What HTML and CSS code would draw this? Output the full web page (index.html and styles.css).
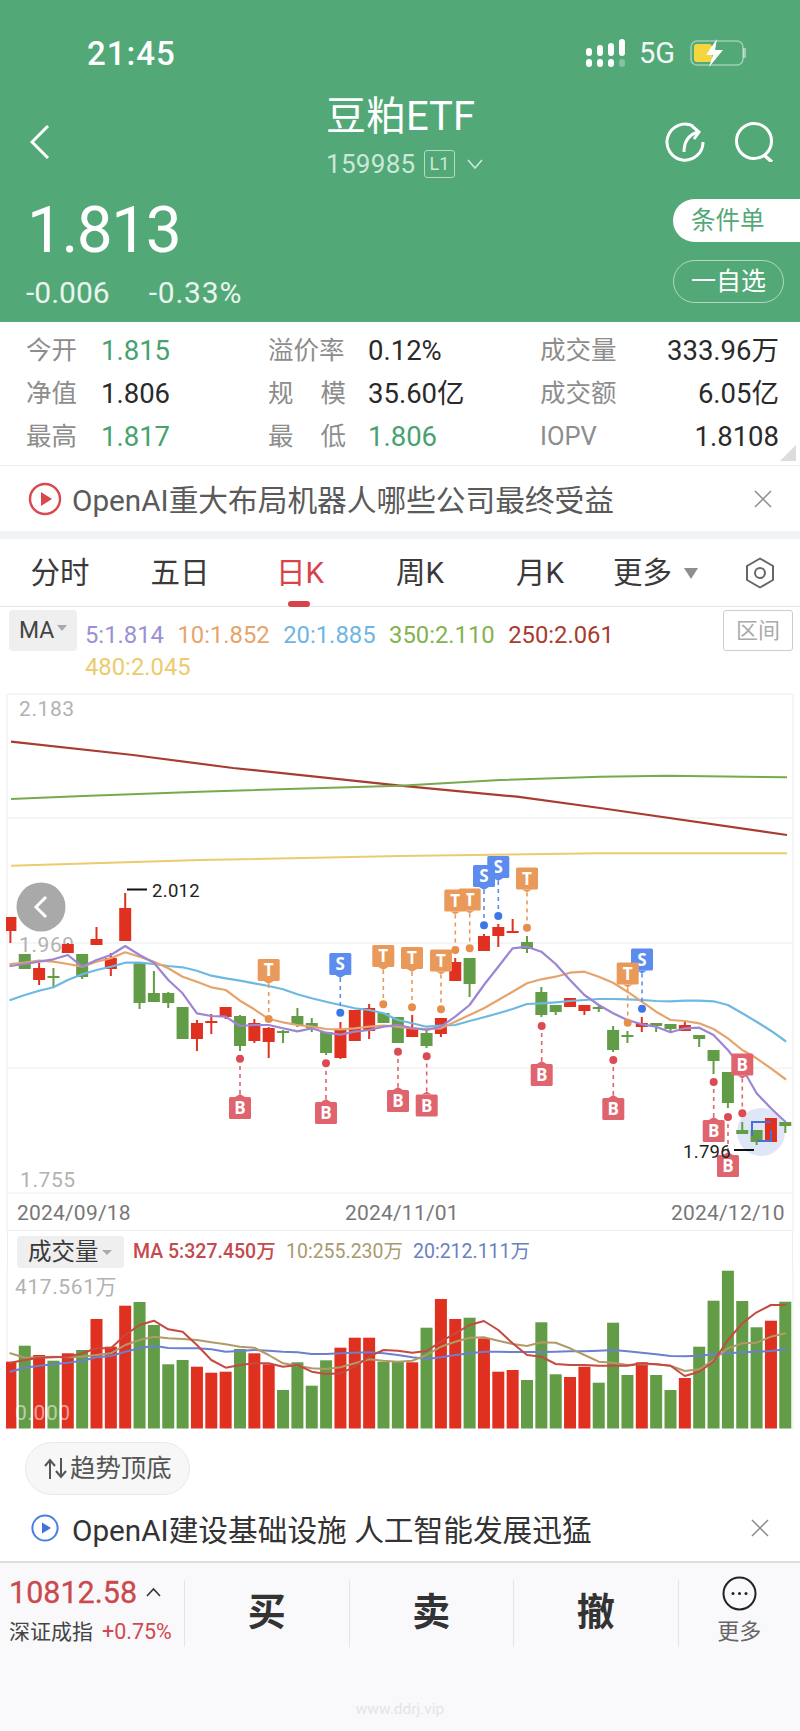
FILE: index.html
```html
<!DOCTYPE html>
<html lang="zh">
<head>
<meta charset="utf-8">
<title>豆粕ETF</title>
<link rel="stylesheet" href="styles.css">
</head>
<body>
<div class="page">
  <header class="head">
    <div class="status">
      <span class="time">21:45</span>
      <div class="status-right">
        <svg class="signal" width="40" height="28" viewBox="0 0 40 28">
          <g fill="#fff">
            <rect x="0" y="9" width="6" height="8" rx="3"/><rect x="0" y="20" width="6" height="8" rx="3"/>
            <rect x="11" y="6" width="6" height="11" rx="3"/><rect x="11" y="20" width="6" height="8" rx="3"/>
            <rect x="22" y="4" width="6" height="13" rx="3"/><rect x="22" y="20" width="6" height="8" rx="3"/>
            <rect x="33" y="0" width="6" height="17" rx="3"/><rect x="33" y="20" width="6" height="8" rx="3" opacity=".3"/>
          </g>
        </svg>
        <span class="net">5G</span>
        <svg class="battery" width="57" height="28" viewBox="0 0 57 28">
          <rect x="1" y="2" width="52" height="24" rx="6" fill="none" stroke="#fff" stroke-opacity=".45" stroke-width="1.5"/>
          <path d="M53 9 h2 a1 1 0 0 1 1 1 v8 a1 1 0 0 1 -1 1 h-2z" fill="#fff" fill-opacity=".45"/>
          <rect x="4" y="5" width="18" height="18" rx="3" fill="#f6d63f"/>
          <path d="M27 0 L16 16 H23 L19 28 L33 11 H25 Z" fill="#fff"/>
        </svg>
      </div>
    </div>
    <div class="nav">
      <svg class="back" width="20" height="34" viewBox="0 0 20 34"><path d="M18 1 L2 17 L18 33" fill="none" stroke="#fff" stroke-width="3"/></svg>
      <div class="title-block">
        <div class="title">豆粕ETF</div>
        <div class="code-row">
          <span class="code">159985</span><span class="level">L1</span>
          <svg width="16" height="11" viewBox="0 0 16 11"><path d="M1 1 L8 9 L15 1" fill="none" stroke="#cfe8da" stroke-width="1.6"/></svg>
        </div>
      </div>
      <div class="nav-icons">
        <svg width="40" height="40" viewBox="0 0 40 40"><path d="M28 4 A18 18 0 1 0 38 20" fill="none" stroke="#fff" stroke-width="3"/><path d="M19 30 C19 20 23 13 33 10" fill="none" stroke="#fff" stroke-width="3"/><path d="M27 4 L34 10 L29 17" fill="none" stroke="#fff" stroke-width="3"/></svg>
        <svg width="40" height="40" viewBox="0 0 40 40"><circle cx="19" cy="19" r="17.5" fill="none" stroke="#fff" stroke-width="3"/><path d="M29 33 L37 40" stroke="#fff" stroke-width="3.5"/></svg>
      </div>
    </div>
    <div class="quote">
      <div class="quote-left">
        <div class="price">1.813</div>
        <div class="changes"><span>-0.006</span><span class="pct">-0.33%</span></div>
      </div>
      <div class="quote-right">
        <div class="pill-solid">条件单</div>
        <div class="pill-line">一自选</div>
      </div>
    </div>
  </header>

  <section class="stats">
    <span class="lb">今开</span><span class="val up">1.815</span>
    <span class="lb">溢价率</span><span class="val">0.12%</span>
    <span class="lb">成交量</span><span class="val right">333.96万</span>
    <span class="lb">净值</span><span class="val">1.806</span>
    <span class="lb spread"><i>规</i><i>模</i></span><span class="val">35.60亿</span>
    <span class="lb">成交额</span><span class="val right">6.05亿</span>
    <span class="lb">最高</span><span class="val up">1.817</span>
    <span class="lb spread"><i>最</i><i>低</i></span><span class="val up">1.806</span>
    <span class="lb">IOPV</span><span class="val right">1.8108</span>
    <span class="corner"></span>
  </section>

  <section class="news news-top">
    <svg width="34" height="34" viewBox="0 0 34 34"><circle cx="17" cy="17" r="15" fill="none" stroke="#d9484e" stroke-width="2.4"/><path d="M13 10 L24 17 L13 24Z" fill="#d9484e"/></svg>
    <p class="news-text">OpenAI重大布局机器人哪些公司最终受益</p>
    <svg class="close" width="18" height="18" viewBox="0 0 18 18"><path d="M1 1 L17 17 M17 1 L1 17" stroke="#8c8c8c" stroke-width="1.5"/></svg>
  </section>
  <div class="band"></div>

  <nav class="tabs">
    <span class="tab">分时</span>
    <span class="tab">五日</span>
    <span class="tab active">日K</span>
    <span class="tab">周K</span>
    <span class="tab">月K</span>
    <span class="tab more">更多<em></em></span>
    <svg class="gear" width="30" height="32" viewBox="0 0 30 32"><path d="M15 1.5 L28 9 V23 L15 30.5 L2 23 V9 Z" fill="none" stroke="#666" stroke-width="2" stroke-linejoin="round"/><circle cx="15" cy="16" r="5" fill="none" stroke="#666" stroke-width="2"/></svg>
  </nav>

  <section class="legend">
    <div class="ma-btn">MA<em></em></div>
    <div class="ma-vals">
      <span class="c5">5:1.814</span><span class="c10">10:1.852</span><span class="c20">20:1.885</span><span class="c350">350:2.110</span><span class="c250">250:2.061</span><span class="c480">480:2.045</span>
    </div>
    <div class="range">区间</div>
  </section>

  <svg id="price" class="chart" width="800" height="540" viewBox="0 690 800 540">
    <g class="frame">
      <path d="M7 694 H793 M7 818 H793 M7 943 H793 M7 1068 H793 M7 1193 H793 M7 694 V1230 M793 694 V1230"/>
    </g>
    <text class="axis" x="19" y="716">2.183</text>
    <text class="axis" x="19" y="952">1.969</text>
    <text class="axis" x="20" y="1187">1.755</text>
    <text class="date" x="17" y="1220">2024/09/18</text>
    <text class="date" x="345" y="1220">2024/11/01</text>
    <text class="date" x="671" y="1220">2024/12/10</text>
    <circle cx="761" cy="1132" r="24" fill="#dfe7f7"/>
    <g id="plot"></g>
    <path d="M752 1136 V1122 H771 M757 1141 H771 V1130" fill="none" stroke="#4a6fd8" stroke-width="2"/>
    <path d="M127 889.5 H147 M734 1150 H754" stroke="#111" stroke-width="1.8"/>
    <text class="mark" x="152" y="897">2.012</text>
    <text class="mark" x="683" y="1158">1.796</text>
    <circle cx="41" cy="907" r="24.5" fill="#a9a9a9"/>
    <path d="M46 897 L36 907 L46 917" fill="none" stroke="#fff" stroke-width="3"/>
  </svg>

  <section class="vol-head">
    <div class="vol-btn">成交量<em></em></div>
    <span class="v5">MA 5:327.450万</span>
    <span class="v10">10:255.230万</span>
    <span class="v20">20:212.111万</span>
  </section>
  <svg id="volume" class="chart" width="800" height="172" viewBox="0 1270 800 172">
    <path class="frameline" d="M7 1270 V1430 M793 1270 V1430"/>
    <text class="axis vol" x="15" y="1294">417.561万</text>
    <g id="vplot"></g>
    <text class="axis vol zero" x="15" y="1420">0.000</text>
  </svg>

  <div class="trend">
    <svg class="arrows" width="26" height="22" viewBox="0 0 26 22"><path d="M7 21 V2 M2 8 L7 2 L12 8 M18 0 V19 M13 13 L18 19 L23 13" fill="none" stroke="#555" stroke-width="2"/></svg>
    <span>趋势顶底</span>
  </div>

  <section class="news news-bot">
    <svg width="28" height="28" viewBox="0 0 28 28"><circle cx="14" cy="14" r="12.6" fill="none" stroke="#4a7fe0" stroke-width="2"/><path d="M11 8.5 L20 14 L11 19.5Z" fill="#3f74dc"/></svg>
    <p class="news-text dark">OpenAI建设基础设施 人工智能发展迅猛</p>
    <svg class="close" width="18" height="18" viewBox="0 0 18 18"><path d="M1 1 L17 17 M17 1 L1 17" stroke="#8c8c8c" stroke-width="1.5"/></svg>
  </section>

  <footer class="bar">
    <div class="bar-row">
      <div class="index">
        <div class="idx-top"><span class="idx-num">10812.58</span><svg width="15" height="10" viewBox="0 0 15 10"><path d="M1 9 L7.5 2 L14 9" fill="none" stroke="#333" stroke-width="1.6"/></svg></div>
        <div class="idx-bot"><span>深证成指</span><span class="idx-pct">+0.75%</span></div>
      </div>
      <div class="act">买</div>
      <div class="act">卖</div>
      <div class="act">撤</div>
      <div class="act-more">
        <svg width="35" height="35" viewBox="0 0 35 35"><circle cx="17.5" cy="17.5" r="16" fill="none" stroke="#222" stroke-width="2"/><circle cx="11" cy="17.5" r="1.5" fill="#222"/><circle cx="17.5" cy="17.5" r="1.5" fill="#222"/><circle cx="24" cy="17.5" r="1.5" fill="#222"/></svg>
        <span>更多</span>
      </div>
    </div>
    <div class="mark-site">www.ddrj.vip</div>
  </footer>
</div>
<script src="chart.js"></script>
</body>
</html>
```

FILE: styles.css
```css
* { box-sizing: border-box; }
html, body { margin: 0; padding: 0; background: #fff; }
body { font-family: Roboto, "Noto Sans CJK SC", sans-serif; }
.page { width: 800px; height: 1731px; overflow: hidden; display: flex; flex-direction: column; }
p { margin: 0; }
em { font-style: normal; }
i { font-style: normal; }

.head { height: 322px; background: #52a877; color: #fff; flex: none; }
.status { margin-top: 14px; height: 78px; padding: 0 53px 0 87px; display: flex; justify-content: space-between; align-items: center; }
.time { font-size: 33px; font-weight: 500; letter-spacing: 1px; }
.status-right { display: flex; align-items: center; }
.net { font-size: 29px; margin: 0 15px 0 13px; color: #f2f9f5; }
.nav { height: 86px; padding: 7px 25px 0 30px; display: flex; justify-content: space-between; position: relative; }
.back { margin-top: 26px; }
.title-block { position: absolute; left: 326px; top: 7px; }
.title { font-size: 40px; line-height: 36px; height: 36px; white-space: nowrap; }
.code-row { margin-top: 15px; height: 28px; display: flex; align-items: center; color: #cde7d9; }
.code { font-size: 26px; width: 98px; letter-spacing: .3px; }
.level { width: 31px; height: 28px; border: 1px solid #b6dcc8; border-radius: 3px; font-size: 18px; text-align: center; line-height: 26px; margin-right: 12px; }
.nav-icons { display: flex; gap: 30px; margin-top: 23px; height: 40px; }
.quote { height: 144px; display: flex; justify-content: space-between; }
.quote-left { padding: 22px 0 0 27px; }
.price { font-size: 64px; line-height: 62px; letter-spacing: -1.5px; }
.changes { margin-top: 16px; display: flex; gap: 39px; font-size: 30px; line-height: 30px; margin-left: -1px; color: #e9f5ee; }
.pct { letter-spacing: .8px; }
.quote-right { width: 127px; padding-top: 21px; display: flex; flex-direction: column; gap: 18px; }
.pill-solid { height: 43px; background: #fff; border-radius: 22px 0 0 22px; color: #52a877; font-size: 24.5px; line-height: 43px; padding-left: 18px; }
.pill-line { width: 111px; height: 43px; border: 1px solid rgba(255,255,255,.55); border-radius: 22px; font-size: 25px; line-height: 41px; padding-left: 17px; white-space: nowrap; }

.stats { height: 144px; flex: none; padding: 7px 21px 0 26px; display: grid; grid-template-columns: 75px 167px 100px 172px 100px 1fr; grid-auto-rows: 43px; align-items: center; border-bottom: 1px solid #ececec; position: relative; }
.lb { color: #8d8d8d; font-size: 25.5px; line-height: 43px; white-space: nowrap; }
.spread { display: flex; justify-content: space-between; width: 78px; }
.val { color: #2a2a2a; font-size: 27.5px; line-height: 43px; white-space: nowrap; }
.val.up { color: #47a26f; }
.val.right { text-align: right; }
.corner { position: absolute; right: 4px; bottom: 4px; width: 0; height: 0; border-left: 16px solid transparent; border-bottom: 16px solid #dcdcdc; }

.news { display: flex; align-items: center; flex: none; }
.news-top { height: 65px; padding: 0 28px 0 28px; }
.news-bot { height: 66px; padding: 0 31px 0 31px; }
.news-text { font-size: 29.7px; color: #5a5a5a; white-space: nowrap; margin-left: 10px; flex: 1; }
.news-bot .news-text { margin-left: 13px; }
.news-text.dark { color: #333; }
.band { height: 8px; background: #f0f3f6; flex: none; }

.tabs { height: 68px; flex: none; display: grid; grid-template-columns: repeat(5, 120px) 98px 1fr; align-items: center; border-bottom: 1px solid #e6e6e6; }
.tab { font-size: 29.5px; color: #3a3a3a; text-align: center; position: relative; line-height: 68px; height: 68px; }
.tab.active { color: #d8434a; }
.tab.active::after { content: ""; position: absolute; left: 48px; bottom: 0; width: 22px; height: 6px; border-radius: 3px; background: #d8434a; }
.more { display: flex; align-items: center; justify-content: flex-end; white-space: nowrap; }
.more em { width: 0; height: 0; margin-left: 12px; border-left: 7px solid transparent; border-right: 7px solid transparent; border-top: 11px solid #8e8e8e; }
.gear { justify-self: end; margin-right: 25px; }

.legend { height: 83px; flex: none; position: relative; padding: 3px 0 0 9px; display: flex; align-items: flex-start; gap: 8px; }
.ma-btn { width: 68px; height: 41px; background: #efefef; border-radius: 4px; color: #444; font-size: 23px; line-height: 41px; padding-left: 10px; display: flex; align-items: center; }
.ma-btn em { margin-left: 3px; border-left: 5px solid transparent; border-right: 5px solid transparent; border-top: 6px solid #aaa; margin-top: -5px; }
.ma-vals { width: 560px; padding-top: 9px; display: flex; flex-wrap: wrap; column-gap: 13.5px; font-size: 23.8px; line-height: 32px; }
.c5 { color: #9c8fd6; } .c10 { color: #e5a56c; } .c20 { color: #6db6e4; } .c350 { color: #84b24f; } .c250 { color: #a83c30; } .c480 { color: #eccb6e; }
.range { position: absolute; right: 7px; top: 3px; width: 70px; height: 41px; border: 1px solid #ccc; border-radius: 3px; color: #aaa; font-size: 22px; line-height: 39px; text-align: center; }

.chart { display: block; flex: none; }
.frame path, .frameline { fill: none; stroke: #ececec; stroke-width: 1; }
.axis { font-size: 21px; fill: #b2b2b2; letter-spacing: .6px; }
.axis.vol { font-size: 21px; }
.axis.zero { fill: #fff; fill-opacity: .55; }
.date { font-size: 21px; fill: #777; letter-spacing: .2px; }
.mark { font-size: 18.5px; fill: #222; letter-spacing: .3px; }
.flag-t { font-size: 17px; font-weight: 700; fill: #fff; text-anchor: middle; font-family: "Open Sans", sans-serif; }

.vol-head { height: 40px; flex: none; margin: 0 7px; padding: 5px 0 0 9px; border: 1px solid #ececec; border-bottom: 0; display: flex; align-items: flex-start; font-size: 19.5px; line-height: 32px; white-space: nowrap; }
.vol-btn { width: 107px; height: 32px; background: #efefef; border-radius: 4px; font-size: 23.5px; color: #3a3a3a; padding-left: 11px; margin-right: 9px; display: flex; align-items: center; }
.vol-btn em { margin-left: 3px; border-left: 5px solid transparent; border-right: 5px solid transparent; border-top: 5px solid #aaa; }
.v5 { color: #c54a4e; font-weight: 500; width: 153px; }
.v10 { color: #a99a6e; width: 127px; }
.v20 { color: #6b80c2; }

.trend { margin: 0 0 0 25px; flex: none; width: 165px; height: 53px; border: 1px solid #e9e9e9; background: #f7f7f7; border-radius: 27px; font-size: 25.4px; line-height: 51px; color: #555; padding-left: 17px; white-space: nowrap; display: flex; align-items: center; gap: 1px; }

.bar { flex: 1; background: #f9f9fb; border-top: 2px solid #dedede; display: flex; flex-direction: column; }
.bar-row { display: grid; grid-template-columns: 184px 164.5px 164.5px 164.5px 1fr; margin-top: 17px; height: 64px; }
.index { padding-left: 9px; margin-top: -6px; }
.idx-top { display: flex; align-items: center; gap: 9px; height: 36px; }
.idx-num { font-size: 30.5px; color: #c9494d; -webkit-text-stroke: .3px #c9494d; }
.idx-bot { display: flex; gap: 9px; font-size: 21px; color: #444; white-space: nowrap; margin-top: 8px; line-height: 28px; }
.idx-pct { color: #d2484e; font-size: 21.5px; }
.act { font-size: 38px; font-weight: 700; color: #333; text-align: center; line-height: 64px; border-left: 1px solid #e4e4e4; }
.act-more { border-left: 1px solid #e4e4e4; display: flex; flex-direction: column; align-items: center; margin-top: 0; }
.act-more svg { margin-top: -4px; }
.act-more span { font-size: 22px; color: #666; line-height: 30px; margin-top: 6px; }
.mark-site { margin-top: 56px; text-align: center; font-size: 15.5px; color: #e4e4e6; }
```

FILE: chart.js
```js
var NS = "http://www.w3.org/2000/svg";
function add(parent, tag, attrs, text) {
  var el = document.createElementNS(NS, tag);
  for (var k in attrs) el.setAttribute(k, attrs[k]);
  if (text) el.textContent = text;
  parent.appendChild(el);
  return el;
}
var RED = "#df3020", GREEN = "#629c46";
function cx(i) { return 10.4 + 14.35 * i; }
function line(parent, ys, color, width) {
  var pts = ys.map(function (y, i) { return cx(i).toFixed(1) + "," + y; }).join(" ");
  add(parent, "polyline", { points: pts, fill: "none", stroke: color, "stroke-width": width || 2.2, "stroke-linejoin": "round", "stroke-linecap": "round" });
}

/* candles: colour, wick top, body top, body bottom, wick bottom */
var candles = [
  ["r",917,917,931,943],["g",954,954,969,969],["r",963,968,980,985],["g",968,976,978,988],
  ["r",943,944,953,953],["g",954,954,977,979],["r",927,939,945,945],["r",953,958,969,976],
  ["r",893,908,941,941],["g",962,962,1003,1009],["g",971,993,1002,1002],["g",992,993,1003,1008],
  ["g",1007,1007,1039,1039],["r",1020,1023,1039,1051],["r",1014,1021,1023,1034],["r",1007,1007,1017,1019],
  ["g",1015,1016,1046,1051],["r",1019,1023,1041,1043],["r",1027,1028,1042,1058],["g",1030,1031,1033,1043],
  ["g",1008,1016,1025,1027],["g",1018,1023,1028,1032],["g",1032,1032,1053,1055],["r",1022,1030,1058,1059],
  ["r",1010,1010,1041,1041],["r",1004,1008,1031,1039],["g",1013,1013,1023,1023],["g",1017,1017,1043,1043],
  ["r",1015,1028,1037,1037],["g",1030,1033,1046,1048],["r",1018,1018,1034,1037],["r",958,962,981,981],
  ["g",958,958,984,997],["r",934,936,951,951],["r",924,927,936,947],["r",919,931,933,933],
  ["g",936,942,949,953],["g",987,992,1015,1017],["g",1005,1005,1012,1015],["r",998,998,1007,1007],
  ["r",1005,1005,1011,1015],["g",1005,1007,1009,1012],["g",1026,1030,1050,1052],["g",1031,1035,1037,1043],
  ["r",1017,1023,1027,1032],["g",1023,1023,1026,1032],["g",1024,1024,1029,1033],["r",1021,1025,1031,1031],
  ["g",1035,1035,1039,1047],["g",1050,1050,1061,1074],["g",1072,1072,1103,1108],["g",1122,1130,1134,1134],
  ["g",1130,1130,1142,1145],["r",1118,1118,1142,1142],["g",1122,1122,1126,1133]
];
var plot = document.getElementById("plot");
candles.forEach(function (c, i) {
  var col = c[0] === "r" ? RED : GREEN, x = cx(i);
  add(plot, "rect", { x: x - 1, y: c[1], width: 2, height: c[4] - c[1], fill: col });
  var left = Math.max(6, x - 6);
  add(plot, "rect", { x: left, y: c[2], width: x + 6 - left, height: Math.max(c[3] - c[2], 2), fill: col });
});

/* long averages */
add(plot, "polyline", { points: "11,741.7 133,755 233,768 400,785.7 517,796.7 600,808 787,835", fill: "none", stroke: "#a83c30", "stroke-width": 2.2 });
add(plot, "polyline", { points: "11,799 83,796 200,791.7 400,785.7 500,780 600,776.7 667,775.7 787,777.3", fill: "none", stroke: "#78a94e", "stroke-width": 2 });
add(plot, "polyline", { points: "11,865.7 200,860 400,856 600,853.3 787,853.3", fill: "none", stroke: "#eccb6e", "stroke-width": 2 });

line(plot, [1000,995,990.7,987.3,980,974.3,970,966.7,962.7,962.7,964,966,967.3,970.7,975.7,978.3,980.7,983.3,986,989.3,994.3,998.3,1001.7,1005,1008.3,1010,1013.3,1020,1023.3,1026.7,1025.7,1025,1021,1017.3,1013.3,1009,1004,1003.3,1002.3,1001,1000,999,999,999.3,1000,1001,1001.3,1000.7,1000.7,1001.3,1005,1013.3,1021.7,1030.7,1041], "#6db9e2");
line(plot, [964,962.7,960.7,961.7,964,966.7,961.7,958.3,952.3,956.7,961.7,968.3,976.7,981.7,987.3,990,1000.7,1009.3,1019,1022.3,1025,1026.7,1029,1029.3,1028.3,1026.7,1025.7,1026.7,1028.3,1029,1028.3,1021.7,1015,1008.3,1000,991.7,983.3,979.3,976.7,972.7,971.7,976.7,982.7,991.7,1001.7,1011.7,1020,1021,1023.3,1029,1038.3,1050,1058.3,1068.3,1079], "#e6a46c");
line(plot, [966,964,961.7,959.3,955,966.7,960,955,946,955,962.7,980,993.3,1013.3,1016,1016.7,1026,1025,1025,1028.3,1031.3,1028.3,1032.7,1034.7,1031.7,1030,1026.7,1025,1028,1030,1026.7,1016.7,1005,985,966.7,948.3,946.7,951.7,964,980,995,1005,1013.3,1020,1024.3,1026.7,1032.3,1028.3,1027.7,1035,1050,1068.3,1093.3,1108.3,1121.7], "#9c86d4");

/* trade flags: letter, x, flag top, dot y */
var FLAG = { T: ["#e99a5a", "#e88e4c"], S: ["#5c8cee", "#3b78e6"], B: ["#e0646e", "#dc4a54"] };
function flag(letter, x, top, dot) {
  var col = FLAG[letter];
  var pointUp = letter === "B" && top > dot;
  var lineA = pointUp ? top - 3 : top + 25, lineB = dot;
  add(plot, "line", { x1: x, y1: lineA, x2: x, y2: lineB, stroke: col[0], "stroke-width": 1.6, "stroke-dasharray": "4 4" });
  add(plot, "circle", { cx: x, cy: dot, r: 4, fill: col[1] });
  var tip = pointUp ? top - 3 : top + 25, base = pointUp ? top : top + 22;
  add(plot, "polygon", { points: (x - 5) + "," + base + " " + (x + 5) + "," + base + " " + x + "," + tip, fill: col[0] });
  add(plot, "rect", { x: x - 11, y: top, width: 22, height: 22, rx: 1.5, fill: col[0] });
  add(plot, "text", { x: x, y: top + 17, "class": "flag-t" }, letter);
}
[
  ["T",268.7,959,1019],["S",340.3,953,1012.7],["T",383.3,945,1004.3],["T",412,947,1007.3],
  ["T",441,949.5,1009.3],["T",469.7,888.5,948.3],["T",455.3,889.5,950],["S",498.3,856,916],
  ["S",484,865,925.3],["T",527,867.5,927.7],["S",642,948.5,1008.7],["T",627.7,962.5,1022.7],
  ["B",240,1097,1058.7],["B",326,1102,1063.3],["B",398,1090,1051.7],["B",426.7,1094.5,1056.3],
  ["B",541.7,1064,1026],["B",613.3,1098,1060],["B",713.7,1120,1082],["B",728,1155,1117],
  ["B",742.3,1053.5,1113.3]
].forEach(function (f) { flag(f[0], f[1], f[2], f[3]); });

/* volume */
var vplot = document.getElementById("vplot");
var BASE = 1428.5;
function vy(z) { return +(1220 + z / 3).toFixed(1); }
var vols = [["r",425],["g",377],["r",405],["g",422],["r",400],["g",390],["r",297],["r",380],["r",257],["g",246],["g",315],["g",433],["g",420],["r",440],["r",458],["r",455],["g",387],["r",400],["r",433],["g",510],["g",427],["g",497],["g",421],["r",383],["r",353],["r",353],["g",425],["g",425],["r",427],["g",323],["r",237],["r",297],["g",293],["r",355],["r",455],["r",450],["g",480],["g",307],["g",463],["r",471],["r",440],["g",488],["g",308],["g",465],["r",427],["g",465],["g",510],["r",474],["g",380],["g",242],["g",152],["g",243],["g",322],["r",302],["g",245]];
vols.forEach(function (v, i) {
  var x = cx(i), left = Math.max(6, x - 6), top = vy(v[1]);
  add(vplot, "rect", { x: left, y: top, width: x + 6 - left, height: BASE - top, fill: v[0] === "r" ? RED : GREEN });
});
var vma20 = [455,443,437,433,428,422,412,408,395,385,377,384,385,385,388,395,393,390,392,395,397,402,402,400,398,397,400,405,412,417,412,405,400,395,395,396,396,396,395,394,394,392,390,394,398,403,408,409,407,403,400,397,395,393,388];
var vma10 = [400,413,412,410,412,410,405,400,375,360,350,355,357,360,367,373,380,383,405,430,437,445,447,442,430,418,422,425,422,405,380,365,353,352,362,372,378,367,368,385,405,425,428,435,432,433,437,453,448,420,385,370,368,350,340];
var vma5 = [428,420,413,412,410,400,385,385,345,315,302,328,335,375,420,443,435,430,430,440,435,455,462,460,440,410,390,392,398,393,365,340,315,303,330,370,405,410,432,435,435,437,437,437,430,433,437,468,455,425,360,310,277,255,255];
line(vplot, vma20.map(vy), "#6b80cf", 2);
line(vplot, vma10.map(vy), "#b09a68", 2);
line(vplot, vma5.map(vy), "#c44a42", 2);
```
